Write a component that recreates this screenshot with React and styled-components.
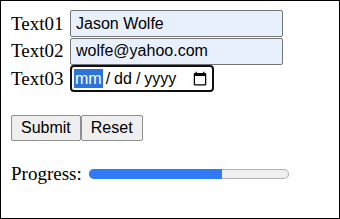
import React from 'react'
import styled, { createGlobalStyle } from 'styled-components'

const GlobalStyle = createGlobalStyle`
  body {
    margin: 0;
    background: #fff;
  }
`

const App = () => {
  return (
    <>
      <GlobalStyle />
      <Frame>
        <Fields>
          <Row>
            <Label htmlFor="text01">Text01</Label>
            <TextInput id="text01" type="text" defaultValue="Jason Wolfe" $width="213px" />
          </Row>
          <Row>
            <Label htmlFor="text02">Text02</Label>
            <TextInput id="text02" type="email" defaultValue="wolfe@yahoo.com" $width="213px" />
          </Row>
          <Row>
            <Label htmlFor="text03">Text03</Label>
            <DateInput id="text03" type="date" />
          </Row>
        </Fields>

        <Buttons>
          <Button type="submit">Submit</Button>
          <Button type="reset">Reset</Button>
        </Buttons>

        <ProgressRow>
          <span>Progress:</span>
          <Progress value={66.5} max={100} />
        </ProgressRow>
      </Frame>
    </>
  )
}

const Frame = styled.div`
  width: 340px;
  height: 219px;
  box-sizing: border-box;
  border: 1px solid #000;
  padding: 9px 10px;
  font-family: "Liberation Serif", "Times New Roman", serif;
  font-size: 19px;
  color: #000;
`

const Fields = styled.div`
  display: flex;
  flex-direction: column;
  gap: 0.5px;
`

const Row = styled.div`
  display: flex;
  align-items: center;
  height: 27px;
`

const Label = styled.label`
  width: 59px;
  flex: none;
`

const TextInput = styled.input`
  box-sizing: border-box;
  width: ${(p) => p.$width};
  height: 27px;
  margin: 0;
  padding: 0 5px;
  border: 1px solid #767676;
  border-radius: 2px;
  background: #e8f0fe;
  font-family: "Liberation Sans", Arial, sans-serif;
  font-size: 16px;
  color: #000;
  outline: none;
`

const DateInput = styled.input`
  box-sizing: border-box;
  width: 144px;
  height: 27px;
  margin: 0;
  padding: 0 2px;
  border: 2px solid #101010;
  border-radius: 4px;
  background: #fff;
  font-family: "Liberation Sans", Arial, sans-serif;
  font-size: 16px;
  color: #000;
  outline: none;

  &::-webkit-datetime-edit-month-field {
    background: #2b74d8;
    color: #fff;
  }

  &::-webkit-datetime-edit-text {
    padding: 0 3px;
  }
`

const Buttons = styled.div`
  display: flex;
  margin-top: 23px;
`

const Button = styled.button`
  margin: 0;
  padding: 3px 9px;
  border: 1px solid #8f8f8f;
  border-radius: 2px;
  background: #efefef;
  font-family: "Liberation Sans", Arial, sans-serif;
  font-size: 16px;
  line-height: 18px;
  color: #000;
  cursor: pointer;
`

const ProgressRow = styled.div`
  display: flex;
  align-items: center;
  gap: 7px;
  margin-top: 22px;
`

const Progress = styled.progress`
  appearance: none;
  -webkit-appearance: none;
  width: 200px;
  height: 10px;
  border: none;

  &::-webkit-progress-bar {
    background: #efefef;
    border-radius: 5px;
    box-shadow: inset 0 0 0 1px #b2b2b2;
  }

  &::-webkit-progress-value {
    background: #2f7af7;
    border-radius: 5px 0 0 5px;
  }
`

export default App
